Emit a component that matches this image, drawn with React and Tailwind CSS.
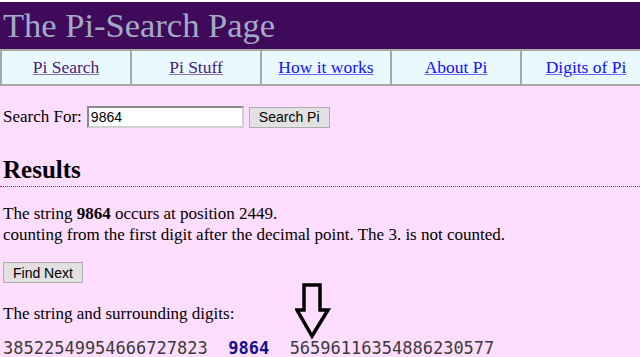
import React from "react";

const links = [
  { label: "Pi Search", visited: true },
  { label: "Pi Stuff", visited: true },
  { label: "How it works", visited: false },
  { label: "About Pi", visited: false },
  { label: "Digits of Pi", visited: false },
];

function DownArrow() {
  return (
    <svg width="40" height="58" viewBox="0 0 40 58" className="absolute left-[292px] top-[-20px]">
      <path
        d="M9 2 H25 V27 H33 L17 53 L2 27 H9 Z"
        fill="none"
        stroke="#000"
        strokeWidth="3.5"
        strokeLinejoin="miter"
      />
    </svg>
  );
}

export default function App() {
  return (
    <div className="h-[357px] bg-[#ffddff] font-['Liberation_Serif',serif] text-[17px] text-black overflow-hidden">
      <div className="h-[2px] bg-white" />
      <header className="h-[47px] bg-[#400a5a] pl-[3px]">
        <h1 className="text-[34.5px] leading-[46px] text-[#a3aac8] font-normal">The Pi-Search Page</h1>
      </header>

      <nav className="overflow-hidden">
        <div className="w-[650px] grid grid-cols-5 bg-[#eaf8ff] border-y-2 border-[#a8a8a8] h-[37px]">
          {links.map((l) => (
            <div key={l.label} className="flex items-center justify-center border-l-2 border-[#a8a8a8]">
              <a
                href="#"
                className={
                  "underline text-[17.5px] " +
                  (l.visited ? "text-[#4a1a7c] decoration-[#8a72a8]" : "text-[#1010ff] decoration-[#6a6aff]")
                }
              >
                {l.label}
              </a>
            </div>
          ))}
        </div>
      </nav>

      <div className="px-[3px]">
        <form className="mt-[19px] flex items-center h-[24px]" onSubmit={(e) => e.preventDefault()}>
          <label className="mr-[5px]">Search For:</label>
          <input
            defaultValue="9864"
            className="w-[157px] h-[22px] bg-white border-2 border-[#8a8a8a] border-r-[#d0d0d0] border-b-[#d0d0d0] px-[2px] font-['Liberation_Sans',sans-serif] text-[14px] outline-none"
          />
          <button
            type="submit"
            className="ml-[5px] h-[21px] px-[9px] bg-[#e1e1e1] border border-[#adadad] font-['Liberation_Sans',sans-serif] text-[14px] leading-none"
          >
            Search Pi
          </button>
        </form>

        <h2 className="mt-[27px] text-[25px] font-bold leading-[28px]">Results</h2>
        <div className="mt-[2px] border-b border-dotted border-[#ff1010] -mx-[3px]" />

        <p className="mt-[16px] leading-[21px]">
          The string <b>9864</b> occurs at position 2449.
          <br />
          counting from the first digit after the decimal point. The 3. is not counted.
        </p>

        <button className="mt-[17px] h-[21px] px-[9px] bg-[#e1e1e1] border border-[#adadad] font-['Liberation_Sans',sans-serif] text-[14px] leading-none">
          Find Next
        </button>

        <div className="relative mt-[18px]">
          <p className="leading-[21px]">The string and surrounding digits:</p>
          <DownArrow />
        </div>

        <div className="mt-[14px] whitespace-pre font-['DejaVu_Sans_Mono',monospace] text-[17px] leading-[20px] text-[#3a3a3a]">
          38522549954666727823{"  "}
          <b className="text-[#101090]">9864</b>
          {"  "}56596116354886230577
        </div>
      </div>
    </div>
  );
}
